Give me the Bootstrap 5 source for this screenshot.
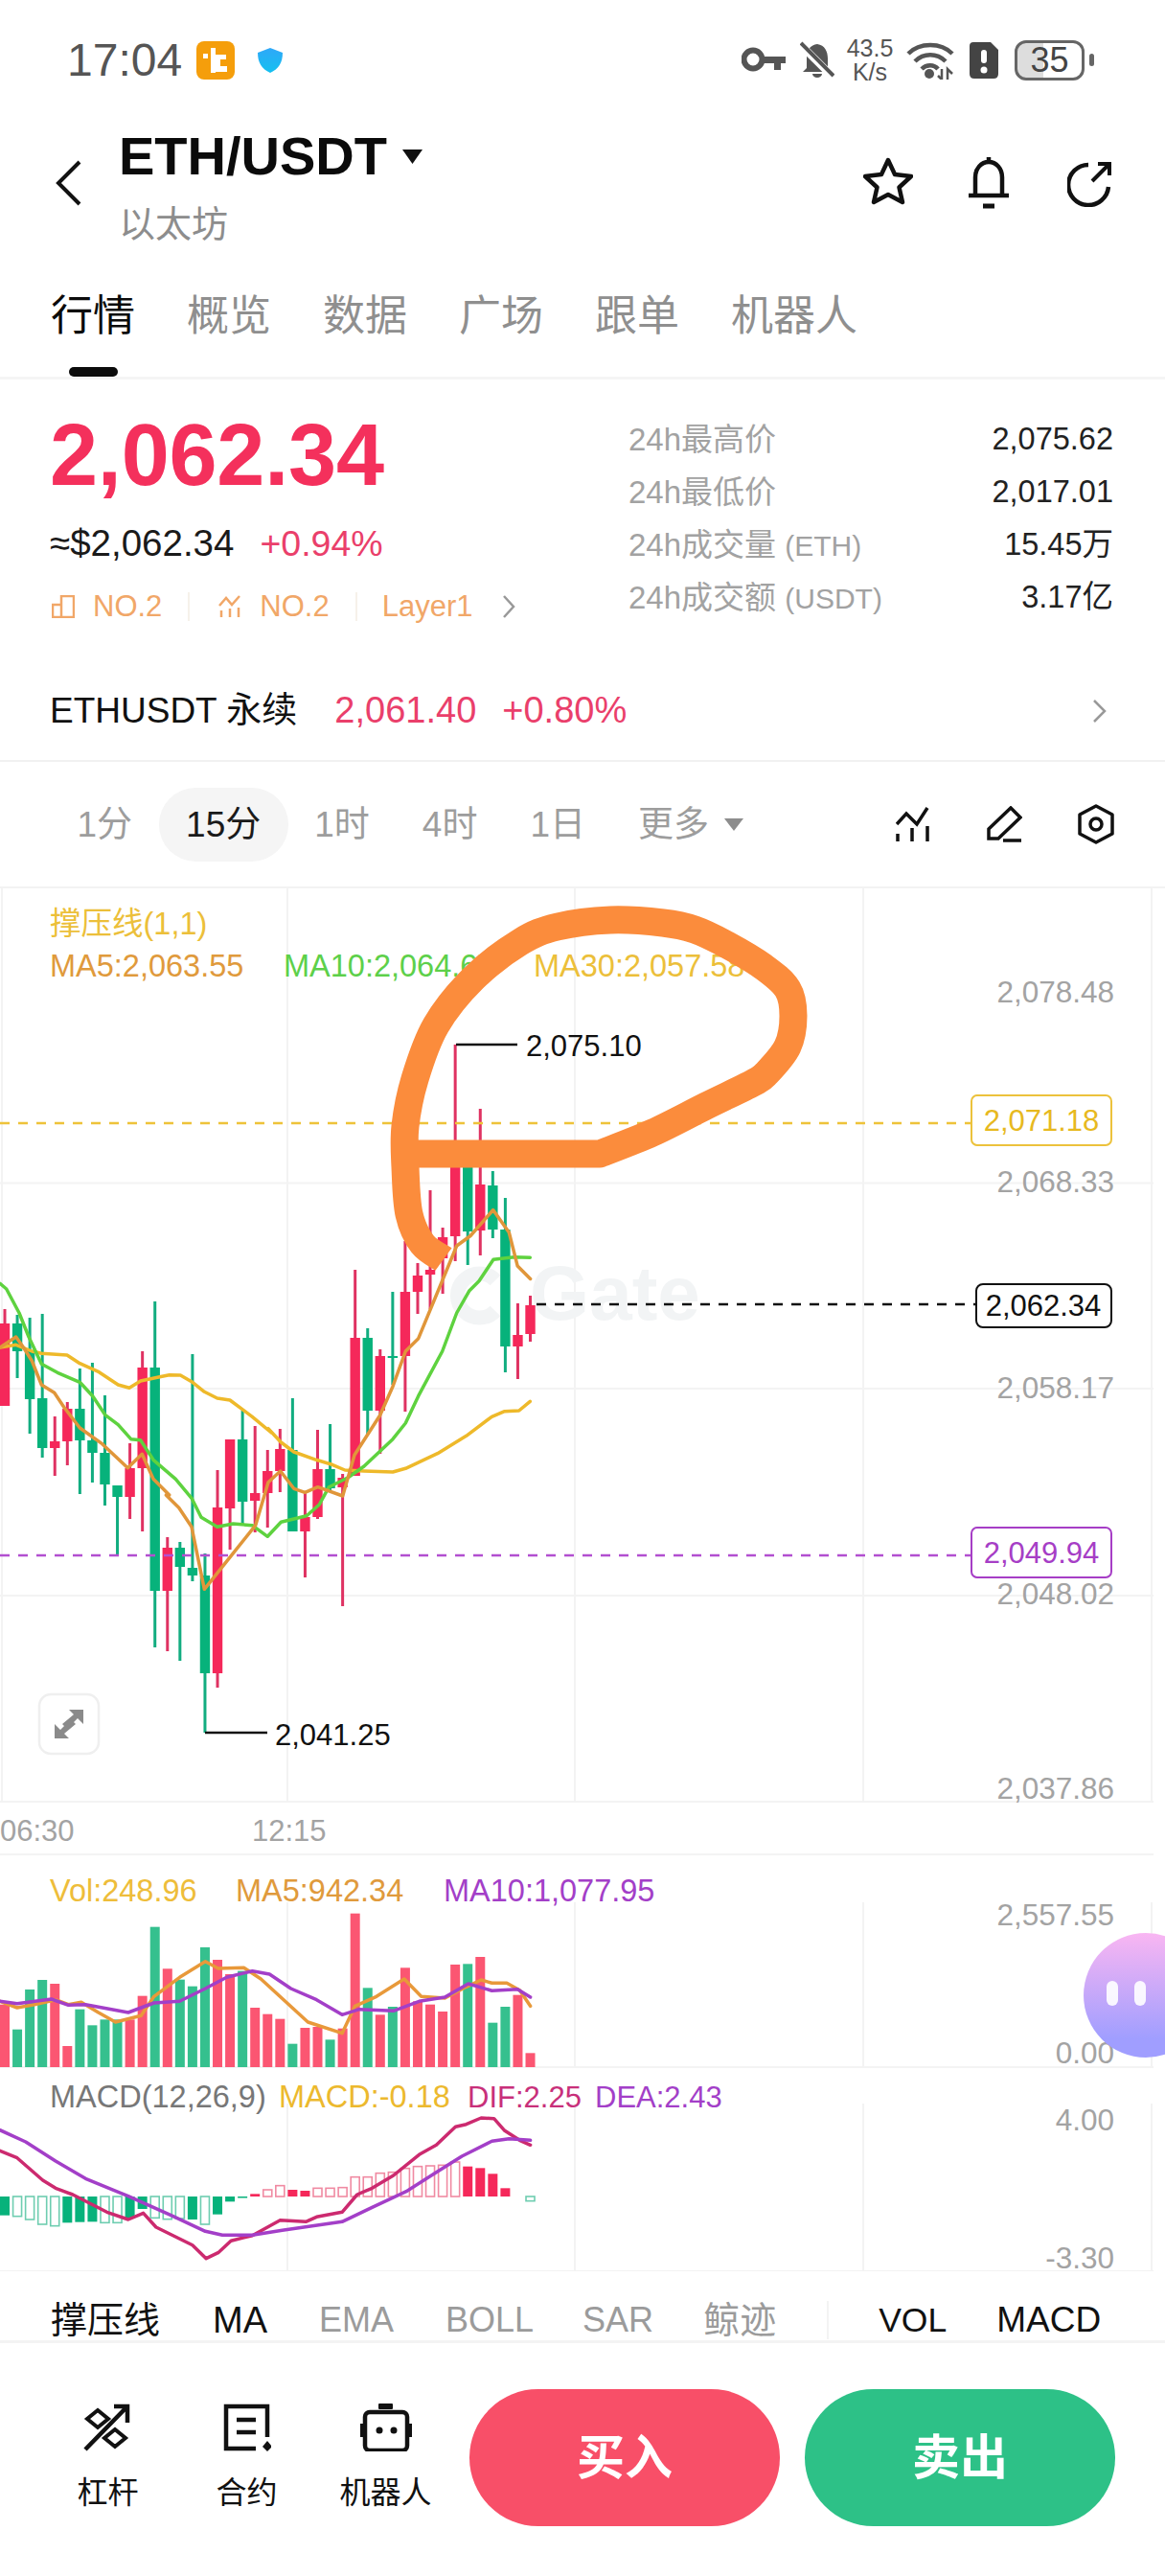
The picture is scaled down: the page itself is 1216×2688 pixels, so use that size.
<!DOCTYPE html>
<html lang="zh-CN">
<head>
<meta charset="utf-8">
<title>ETH/USDT</title>
<link href="https://cdn.jsdelivr.net/npm/bootstrap@5.3.0/dist/css/bootstrap.min.css" rel="stylesheet">
<style>
html,body{margin:0;background:#fff;}
body{width:1216px;height:2688px;overflow:hidden;font-family:"Liberation Sans","Noto Sans CJK SC",sans-serif;color:#111;}
svg{display:block;flex:none;}
.st-bar{height:125px;padding:0 74px 0 70px;color:#555;}
.st-time{font-size:48px;line-height:60px;margin-right:15px;}
.st-shield{margin-left:23px;}
.st-icons{margin-left:auto;}
.st-b1{margin-left:14px;}
.st-speed{margin-left:12px;font-size:25px;line-height:25px;width:50px;text-align:center;}
.st-w{margin-left:13px;}
.st-s{margin-left:15px;}
.st-batt{margin-left:17px;width:73px;height:42px;border:3px solid #666;border-radius:12px;background:linear-gradient(90deg,#ddd 40%,#fff 40%);font-size:36px;line-height:36px;text-align:center;color:#444;}
.st-tip{width:5px;height:13px;background:#666;border-radius:3px;margin-left:5px;}
.hd{height:150px;padding:7px 56px 0 58px;}
.hd-back{margin-top:35px;}
.hd-main{margin-left:39px;}
.hd-title{font-size:56px;font-weight:700;line-height:62px;color:#0b0b0b;}
.hd-sub{font-size:38px;line-height:46px;color:#8d8d8d;margin-top:17px;}
.hd-acts{margin-left:auto;margin-top:32px;}
.hd-bell{margin-left:57px;}
.hd-ref{margin-left:60px;margin-top:4px;}
.tabs-wrap{padding:25px 53px 0;border-bottom:3px solid #f5f5f5;height:121px;gap:54px;}
.tab-t{font-size:44px;line-height:60px;color:#8f8f8f;}
.tab-t.on{color:#0b0b0b;}
.tab-mark{display:block;width:51px;height:10px;background:#0b0b0b;border-radius:5px;margin:23px auto 0;}
.mk{height:294px;padding:29px 54px 0 52px;}
.mk-left{width:604px;}
.price{font-size:90px;font-weight:700;line-height:100px;color:#f4305c;letter-spacing:-.2px;}
.sub-p{font-size:38.5px;line-height:50px;margin-top:17px;color:#1a1a1a;gap:27px;}
.sub-p .up{font-size:37.5px;}
.up{color:#ea3f6b;}
.tags{font-size:31px;line-height:40px;margin-top:21px;color:#f1a768;padding-left:2px;}
.tag-n1{margin-left:19px;}
.tag-n2{margin-left:19px;}
.tag-sep{width:2px;height:30px;background:#f6f1ea;}
.tag-s1{margin:0 30px 0 27px;}
.tag-s2{margin:0 26px 0 27px;}
.tag-ch{margin-left:30px;}
.stats{padding-top:6px;width:506px;}
.st-row{height:55px;font-size:33px;color:#a2a2a2;}
.st-row i{font-style:normal;font-size:30px;}
.st-row b{font-weight:400;font-size:32.5px;color:#222;}
.perp{height:105px;padding:0 60px 0 52px;border-bottom:2px solid #f1f1f1;font-size:37px;}
.perp .v{font-size:38px;}
.perp .v1{margin-left:39px;}
.perp .v2{margin-left:27px;}
.perp-ch{margin-left:auto;}
.ivl{height:132px;padding:0 53px;border-bottom:2px solid #f3f3f3;font-size:37px;color:#9d9d9d;}
.ivl-i{padding:0 27.5px;line-height:77px;}
.ivl-i.on{padding:0 28.5px;background:#f5f5f5;border-radius:38px;color:#1a1a1a;}
.ivl-car{margin-left:-11px;}
.ivl-tools{margin-left:auto;gap:58px;}
.chart-wrap{position:relative;height:1443px;overflow:hidden;}
.bubble{position:absolute;left:1131px;top:1090px;width:130px;height:130px;border-radius:50%;background:linear-gradient(180deg,#f9b6f2,#a09eff 85%);}
.eye{position:absolute;top:50px;width:12px;height:26px;background:#fff;border-radius:6px;opacity:.9;}
.eye.l{left:24px;}
.eye.r{left:53px;}
.tx{font-family:"Liberation Sans","Noto Sans CJK SC",sans-serif;font-size:31px;dominant-baseline:central;}
.tx.lg{font-size:32.5px;}
.tx.sm{font-size:31px;}
.tx.ax{fill:#a3a3a3;text-anchor:end;font-size:31.5px;}
.tx.wm{font-size:80px;font-weight:700;fill:#f2f4f5;}
.inds{height:72px;padding:29px 0 0 53px;font-size:36px;line-height:50px;color:#9b9b9b;white-space:nowrap;}
.inds .on{color:#111;}
.inds .big{font-size:38px;}
.inds .i2{margin-left:55px;}
.inds .i3,.inds .i4{margin-left:54px;}
.inds .i5{margin-left:51px;}
.inds .i6{margin-left:52px;}
.inds .i7{margin-left:53px;}
.inds .i8{margin-left:52px;font-size:35.5px;}
.inds .i9{margin-left:52px;font-size:37px;}
.inds-wrap{height:75px;border-bottom:3px solid #f3f3f3;}
.ind-sep{width:2px;height:40px;background:#f3f3f3;}
.foot{padding:48px 0 0 40px;}
.tool{width:145px;padding-top:15px;font-size:32px;line-height:40px;color:#111;text-align:center;}
.tool svg{margin:0 auto 23px;}
.act{width:324px;height:143px;border-radius:72px;border:0;color:#fff;font-size:50px;font-weight:700;line-height:1;}
.act.buy,.act.buy:hover{background:#f84f68;color:#fff;margin-left:15px;}
.act.sell,.act.sell:hover{background:#2dc187;color:#fff;margin-left:26px;}
</style>
</head>
<body>

<div class="st-bar d-flex align-items-center">
  <span class="st-time">17:04</span>
  <svg width="40" height="40" viewBox="0 0 40 40"><rect width="40" height="40" rx="8" fill="#f59e0b"/><rect x="7" y="13" width="5" height="5" fill="#fff"/><rect x="15" y="7" width="5" height="26" fill="#fff"/><path d="M20 14H31V19H25V26H32V32H20Z" fill="#fff"/></svg>
  <svg class="st-shield" width="28" height="28" viewBox="0 0 28 28"><defs><linearGradient id="sh" x1="0" y1="0" x2="0" y2="1"><stop offset="0" stop-color="#2fa8f8"/><stop offset="1" stop-color="#14c0f0"/></linearGradient></defs><path d="M14 1L27 6C27 16 23 23 14 27C5 23 1 16 1 6Z" fill="url(#sh)"/></svg>
  <div class="st-icons d-flex align-items-center">
    <svg width="47" height="27" viewBox="0 0 47 27"><circle cx="12" cy="13" r="9.500" fill="none" stroke="#555" stroke-width="6"/><path d="M20 10H46V17H41V24H34V17H20Z" fill="#555"/></svg>
    <svg class="st-b1" width="36" height="40" viewBox="0 0 36 40"><path d="M18 3C26 4 29 11 29 18V28L33 32H3L7 28V16C7 9 11 4 18 3Z" fill="#555"/><path d="M13 34H23A5 4 0 0 1 13 34Z" fill="#555"/><path d="M0 3L35 38" stroke="#fff" stroke-width="8"/><path d="M1 2L35 36" stroke="#555" stroke-width="4"/></svg>
    <div class="st-speed"><div>43.5</div><div>K/s</div></div>
    <svg class="st-w" width="51" height="40" viewBox="0 0 51 40"><path d="M2 13C14 1 36 1 48 13M9 21C18 12 32 12 41 21M16 29C21 24 29 24 33 29" fill="none" stroke="#555" stroke-width="4.500"/><circle cx="24" cy="34" r="5" fill="#555"/><path d="M37 29V40L33 36M43 40V29L48 34" fill="none" stroke="#555" stroke-width="2.500"/></svg>
    <svg class="st-s" width="30" height="38" viewBox="0 0 30 38"><path d="M4 0H22L30 8V33Q30 38 25 38H5Q0 38 0 33V4Q0 0 4 0Z" fill="#444"/><rect x="12" y="8" width="6" height="14" rx="3" fill="#fff"/><circle cx="15" cy="29" r="3.500" fill="#fff"/></svg>
    <div class="st-batt">35</div><span class="st-tip"></span>
  </div>
</div>

<div class="hd d-flex align-items-start">
  <svg class="hd-back" width="27" height="48" viewBox="0 0 27 48"><path d="M25 2L3 24L25 46" fill="none" stroke="#111" stroke-width="4"/></svg>
  <div class="hd-main">
    <div class="hd-title d-flex align-items-center">ETH/USDT<svg class="ms-3" width="21" height="15" viewBox="0 0 21 15"><path d="M0 0H21L10.500 15Z" fill="#111"/></svg></div>
    <div class="hd-sub">以太坊</div>
  </div>
  <div class="hd-acts d-flex align-items-start">
    <svg width="52" height="50" viewBox="0 0 52 50"><path d="M26 3L33 18L50 20L37.500 31.500L41 47L26 39L11 47L14.500 31.500L2 20L19 18Z" fill="none" stroke="#111" stroke-width="4.500" stroke-linejoin="round"/></svg>
    <svg class="hd-bell" width="44" height="54" viewBox="0 0 44 54"><path d="M22 0V5M8 39V21C8 12 14 5 22 5S36 12 36 21V39M1 40H43" fill="none" stroke="#111" stroke-width="4.500"/><path d="M16 51H28" stroke="#111" stroke-width="5"/></svg>
    <svg class="hd-ref" width="46" height="48" viewBox="0 0 46 48"><path d="M22 4A21 21 0 1 0 43 27" fill="none" stroke="#111" stroke-width="4.500"/><path d="M26 21L43 4M32 3H44V15" fill="none" stroke="#111" stroke-width="4"/></svg>
  </div>
</div>

<div class="tabs-wrap d-flex align-items-start">
  <div><div class="tab-t on">行情</div><span class="tab-mark"></span></div>
  <div class="tab-t">概览</div>
  <div class="tab-t">数据</div>
  <div class="tab-t">广场</div>
  <div class="tab-t">跟单</div>
  <div class="tab-t">机器人</div>
</div>

<div class="mk d-flex">
  <div class="mk-left">
    <div class="price">2,062.34</div>
    <div class="sub-p d-flex"><span>≈$2,062.34</span><span class="up">+0.94%</span></div>
    <div class="tags d-flex align-items-center">
      <svg width="24" height="24" viewBox="0 0 24 24"><path d="M1 10H10V23H1ZM10 1H23V23H10Z" fill="none" stroke="#f1a768" stroke-width="2.500"/></svg>
      <span class="tag-n1">NO.2</span><span class="tag-sep tag-s1"></span>
      <svg width="24" height="24" viewBox="0 0 24 24"><path d="M1 11L8 3L14 10L22 1M3 16V23M12 14V23M21 13V23" fill="none" stroke="#f1a768" stroke-width="2.500"/></svg>
      <span class="tag-n2">NO.2</span><span class="tag-sep tag-s2"></span>
      <span>Layer1</span>
      <svg class="tag-ch" width="14" height="26" viewBox="0 0 14 26"><path d="M2 2L12 13L2 24" fill="none" stroke="#999" stroke-width="2.500"/></svg>
    </div>
  </div>
  <div class="stats">
    <div class="st-row d-flex justify-content-between align-items-center"><span>24h最高价</span><b>2,075.62</b></div>
    <div class="st-row d-flex justify-content-between align-items-center"><span>24h最低价</span><b>2,017.01</b></div>
    <div class="st-row d-flex justify-content-between align-items-center"><span>24h成交量 <i>(ETH)</i></span><b>15.45万</b></div>
    <div class="st-row d-flex justify-content-between align-items-center"><span>24h成交额 <i>(USDT)</i></span><b>3.17亿</b></div>
  </div>
</div>

<div class="perp d-flex align-items-center">
  <span>ETHUSDT 永续</span>
  <span class="up v v1">2,061.40</span>
  <span class="up v v2">+0.80%</span>
  <svg class="perp-ch" width="16" height="26" viewBox="0 0 16 26"><path d="M2 2L13 13L2 24" fill="none" stroke="#999" stroke-width="2.500"/></svg>
</div>

<div class="ivl d-flex align-items-center">
  <span class="ivl-i">1分</span>
  <span class="ivl-i on">15分</span>
  <span class="ivl-i">1时</span>
  <span class="ivl-i">4时</span>
  <span class="ivl-i">1日</span>
  <span class="ivl-i">更多</span>
  <svg class="ivl-car" width="20" height="13" viewBox="0 0 20 13"><path d="M0 0H20L10 13Z" fill="#8d8d8d"/></svg>
  <div class="ivl-tools d-flex align-items-center">
    <svg width="36" height="38" viewBox="0 0 36 38"><path d="M1 19L11 8L22 19L33 2M2 29V37M17 23V37M33 21V37" fill="none" stroke="#111" stroke-width="3.500"/></svg>
    <svg width="38" height="38" viewBox="0 0 38 38"><path d="M26 2L36 12L13 34H3V24ZM18 36H37" fill="none" stroke="#111" stroke-width="3.500"/></svg>
    <svg width="38" height="42" viewBox="0 0 38 42"><path d="M19 2L36 11V31L19 40L2 31V11Z" fill="none" stroke="#111" stroke-width="3.500" stroke-linejoin="round"/><circle cx="19" cy="21" r="6" fill="none" stroke="#111" stroke-width="3.500"/></svg>
  </div>
</div>

<div class="chart-wrap">
  <svg width="1216" height="1443" viewBox="0 927 1216 1443">
    <g stroke="#f3f3f3" stroke-width="2" fill="none">
      <path d="M300 927V1880M600 927V1880M901 927V1880M1202 927V1880M2 927V1880"/>
      <path d="M0 1234.500H1204M0 1449H1204M0 1665H1204M0 1880H1204M0 1935H1204"/>
      <path d="M300 1985V2157M600 1985V2157M901 1985V2157M1202 1985V2157M0 2157H1204"/>
      <path d="M300 2195V2370M600 2195V2370M901 2195V2370M1202 2195V2370M0 2370H1204"/>
    </g>
    <path d="M517 1336A23 23 0 1 0 517 1368" fill="none" stroke="#f2f4f5" stroke-width="15"/>
    <text class="tx wm" x="553" y="1349">Gate</text>
    <g id="candles"></g>
    <path d="M0 1172H1013" stroke="#eec33a" stroke-width="2.500" stroke-dasharray="10 9"/>
    <path d="M560 1361H1018" stroke="#111" stroke-width="2.500" stroke-dasharray="10 9"/>
    <path d="M0 1623H1013" stroke="#b24fd0" stroke-width="2.500" stroke-dasharray="10 9"/>
    <g id="malines" fill="none" stroke-linejoin="round" stroke-linecap="round"></g>

    <path d="M476 1090H540" stroke="#111" stroke-width="2.500"/>
    <path d="M214 1808H279" stroke="#111" stroke-width="2.500"/>
    <text class="tx" x="549" y="1091" fill="#111">2,075.10</text>
    <text class="tx" x="287" y="1810" fill="#111">2,041.25</text>

    <text class="tx lg" x="52" y="964" fill="#ecbf3a">撑压线(1,1)</text>
    <text class="tx lg" x="52" y="1008" fill="#e09a3c">MA5:2,063.55</text>
    <text class="tx lg" x="296" y="1008" fill="#5dd04a">MA10:2,064.67</text>
    <text class="tx lg" x="557" y="1008" fill="#ecbf3a">MA30:2,057.58</text>

    <text class="tx ax" x="1163" y="1035">2,078.48</text>
    <text class="tx ax" x="1163" y="1233">2,068.33</text>
    <text class="tx ax" x="1163" y="1448">2,058.17</text>
    <text class="tx ax" x="1163" y="1663">2,048.02</text>
    <text class="tx ax" x="1163" y="1866">2,037.86</text>

    <rect x="1014" y="1143" width="146" height="52" rx="6" fill="#fff" stroke="#ecc23c" stroke-width="2"/>
    <text class="tx" x="1087" y="1169" text-anchor="middle" fill="#e7b91f">2,071.18</text>
    <rect x="1019" y="1340" width="141" height="45" rx="7" fill="#fff" stroke="#111" stroke-width="2"/>
    <text class="tx" x="1089" y="1362" text-anchor="middle" fill="#111">2,062.34</text>
    <rect x="1014" y="1594" width="146" height="52" rx="6" fill="#fff" stroke="#a63ec6" stroke-width="2"/>
    <text class="tx" x="1087" y="1620" text-anchor="middle" fill="#a63ec6">2,049.94</text>

    <rect x="41" y="1768" width="62" height="62" rx="12" fill="#fff" stroke="#efefef" stroke-width="2.500"/>
    <path d="M87 1784H72L77 1789L65 1799L70 1804L81 1793L87 1799ZM57 1814H72L67 1809L79 1799L74 1794L63 1805L57 1799Z" fill="#8a8a8a"/>

    <text class="tx" x="0" y="1910" fill="#a3a3a3">06:30</text>
    <text class="tx" x="263" y="1910" fill="#a3a3a3">12:15</text>

    <text class="tx lg" x="52" y="1973" fill="#eebd3a">Vol:248.96</text>
    <text class="tx lg" x="246" y="1973" fill="#e09a3c">MA5:942.34</text>
    <text class="tx lg" x="463" y="1973" fill="#a33fc8">MA10:1,077.95</text>
    <text class="tx ax" x="1163" y="1998">2,557.55</text>
    <text class="tx ax" x="1163" y="2142">0.00</text>

    <g id="vol"></g>

    <text class="tx lg" x="52" y="2188" fill="#777">MACD(12,26,9)</text>
    <text class="tx lg" x="291" y="2188" fill="#ecb92e">MACD:-0.18</text>
    <text class="tx sm" x="488" y="2188" fill="#c8307a">DIF:2.25</text>
    <text class="tx sm" x="621" y="2188" fill="#a33fc8">DEA:2.43</text>
    <text class="tx ax" x="1163" y="2212">4.00</text>
    <text class="tx ax" x="1163" y="2356">-3.30</text>

    <g id="macd"></g>

    <path id="ann" fill="none" stroke="#fb8c3c" stroke-width="29" stroke-linejoin="round"/>
  </svg>
  <div class="bubble"><span class="eye l"></span><span class="eye r"></span></div>
</div>

<div class="inds-wrap">
  <div class="inds d-flex align-items-center">
    <span class="on big">撑压线</span>
    <span class="on big i2">MA</span>
    <span class="i3">EMA</span>
    <span class="i4">BOLL</span>
    <span class="i5">SAR</span>
    <span class="big i6">鲸迹</span>
    <span class="ind-sep i7"></span>
    <span class="on i8">VOL</span>
    <span class="on i9">MACD</span>
  </div>
</div>

<div class="foot d-flex align-items-start">
  <div class="tool">
    <svg width="52" height="50" viewBox="2 0 52 50"><path d="M48 3L4 48M34 3H48V20" fill="none" stroke="#111" stroke-width="4.500"/><path d="M17 7L28 16L17 25L6 16ZM35 27L46 36L35 45L24 36Z" fill="#fff" stroke="#111" stroke-width="4"/></svg>
    杠杆
  </div>
  <div class="tool">
    <svg width="50" height="50" viewBox="0 0 50 50"><path d="M46 35V3H3V47H34M14 17H34M14 30H34" fill="none" stroke="#111" stroke-width="4.500"/><path d="M46 39L51 45L46 50L41 45Z" fill="#111"/></svg>
    合约
  </div>
  <div class="tool">
    <svg width="54" height="50" viewBox="0 0 54 50"><rect x="19" y="0" width="15" height="6" rx="1" fill="#111"/><rect x="5" y="9" width="44" height="40" rx="5" fill="none" stroke="#111" stroke-width="4.500"/><path d="M1.500 21V35M52.500 21V35" stroke="#111" stroke-width="3"/><circle cx="20" cy="28" r="3.500" fill="#111"/><circle cx="35" cy="28" r="3.500" fill="#111"/></svg>
    机器人
  </div>
  <button type="button" class="btn act buy">买入</button>
  <button type="button" class="btn act sell">卖出</button>
</div>

<script>
var NS="http://www.w3.org/2000/svg";
function el(parent,tag,attrs){var e=document.createElementNS(NS,tag);for(var k in attrs)e.setAttribute(k,attrs[k]);parent.appendChild(e);return e;}
function xi(i){return 5+13.06*i;}
var RED="#f5285a",GRN="#07b27b",WR="#df3262",WG="#12ad80";
/* colour, high, body top, body bottom, low */
var C=[["r",1366,1381,1467,1467],["g",1372,1381,1410,1438],["g",1375,1410,1460,1496],["g",1371,1459,1511,1521],["r",1478,1504,1511,1540],["r",1463,1470,1504,1529],["g",1428,1470,1503,1559],["g",1422,1503,1516,1547],["g",1456,1516,1549,1571],["g",1550,1550,1562,1623],["r",1506,1532,1562,1585],["r",1410,1427,1532,1598],["g",1358,1427,1660,1719],["r",1604,1615,1660,1723],["g",1609,1615,1635,1733],["g",1413,1636,1644,1650],["g",1621,1644,1746,1808],["r",1534,1573,1746,1761],["r",1502,1502,1574,1617],["g",1472,1502,1567,1590],["r",1488,1558,1566,1599],["r",1513,1535,1558,1594],["r",1491,1512,1535,1557],["g",1459,1513,1598,1598],["r",1558,1583,1598,1646],["r",1492,1533,1583,1585],["g",1486,1533,1553,1555],["r",1538,1542,1552,1676],["r",1325,1396,1540,1540],["g",1386,1396,1472,1497],["r",1408,1415,1472,1517],["g",1348,1415,1416,1445],["r",1295,1348,1415,1473],["r",1318,1331,1348,1371],["r",1242,1325,1330,1366],["r",1281,1291,1313,1350],["r",1090,1215,1290,1316],["g",1200,1210,1285,1320],["r",1157,1236,1284,1310],["g",1222,1237,1283,1292],["g",1250,1283,1405,1432],["r",1360,1393,1405,1439],["r",1352,1362,1392,1400]];
var cg=document.getElementById("candles");
C.forEach(function(c,i){var x=xi(i);
 el(cg,"rect",{x:x-1.5,y:c[1],width:3,height:c[4]-c[1],fill:c[0]=="r"?WR:WG});
 el(cg,"rect",{x:x-5.2,y:c[2],width:10.4,height:Math.max(c[3]-c[2],2),fill:c[0]=="r"?RED:GRN});
});
function poly(g,color,w,groups){var s=[];groups.forEach(function(gp){var sx=gp[0],ox=gp[1],sy=gp[2],oy=gp[3],p=gp[4];for(var i=0;i<p.length;i+=2)s.push((ox+p[i]/sx).toFixed(1)+","+(oy+p[i+1]/sy).toFixed(1));});
 el(g,"polyline",{points:s.join(" "),stroke:color,"stroke-width":w});}
var mg=document.getElementById("malines");
poly(mg,"#eeb92a",3.5,[[3,0,3,1280,[0,378,50,370,100,390,130,397,210,402,250,428,310,455,370,495,405,505,440,483,500,470,530,464,565,465,600,485,640,517,680,537,720,543,790,595,850,645]],[3,280,3,1280,[0,632,40,675,80,705,150,730,200,745,240,762,300,765,390,768,430,757,530,710,620,655,700,595,740,578,785,576,820,547]]]);
poly(mg,"#5ed23f",3.5,[[3,0,3,1280,[0,178,20,195,60,270,90,345,130,430,180,457,250,487,290,530,330,590,370,620,410,665,440,668,480,730,550,790,600,850]],[3,0,3,1560,[600,10,630,70,680,100,730,90,790,95,838,130,880,85,960,65,1000,30]],[3,280,3,1280,[190,815,250,785,300,750,390,665,430,615,470,530,545,390,590,270,630,200,660,170,705,103,770,95,820,97]]]);
poly(mg,"#e0963a",3.5,[[3,0,3,1280,[0,378,50,345,75,380,100,420,130,495,170,520,200,565,250,630,320,680,400,755,445,712,480,790,530,840]],[3,0,3,1560,[520,0,560,40,600,100,640,295,700,220,800,95]],[3,280,3,1280,[0,800,38,765,80,820,115,832,155,815,233,843,270,715,350,590,390,500,430,390,470,350,590,60]],[2.24,0,2.851,930,[1100,1025,1153,948,1190,1015,1210,1115,1240,1153]]]);
var VT=[575,653,528,498,510,705,590,640,622,622,622,548,332,463,497,518,396,435,480,470,585,605,620,698,648,645,685,650,290,523,607,582,460,565,575,597,450,448,426,632,582,545,727];
var vg=document.getElementById("vol");
VT.forEach(function(t,i){var y=1900+t/3;el(vg,"rect",{x:xi(i)-5,y:y,width:10,height:2157-y,fill:C[i][0]=="r"?"#fb5672":"#35c08e"});});
var vl=el(vg,"g",{fill:"none","stroke-linejoin":"round","stroke-linecap":"round"});
poly(vl,"#e8993a",3.5,[[2.24,0,3,1900,[0,565,40,585,80,575,130,560,160,575,190,568,230,600,270,630,330,610,360,550,420,490,480,440,510,462,570,460,610,495,720,630,800,665,830,580,880,550,945,495,985,550,1040,555,1090,520,1125,498,1150,508,1185,508,1215,530,1240,580]]]);
poly(vl,"#a33fc8",3.5,[[2.24,0,3,1900,[0,565,40,572,120,558,160,577,200,575,300,600,360,570,420,565,480,525,530,490,590,470,630,480,680,525,740,560,800,607,840,590,920,595,980,565,1040,552,1095,510,1150,532,1210,527,1240,552]]]);
/* [end of bar in zoom px, hollow] */
var H=[[1235,0],[1238,1],[1248,1],[1263,1],[1268,1],[1258,0],[1256,0],[1255,0],[1258,1],[1258,1],[1243,0],[1215,0],[1243,1],[1247,1],[1245,1],[1248,0],[1263,1],[1232,0],[1192,0],[1178,0],[1168,0],[1155,1],[1142,1],[1155,0],[1158,0],[1150,1],[1150,1],[1148,1],[1115,1],[1115,1],[1103,1],[1100,1],[1088,1],[1082,1],[1080,1],[1078,1],[1068,1],[1082,0],[1087,0],[1105,0],[1150,0],null,[1190,1]];
var hg=document.getElementById("macd"),Z=2292;
H.forEach(function(h,i){if(!h)return;var y=1900+h[0]/3,top=Math.min(y,Z),ht=Math.max(Math.abs(y-Z),1.5),up=y<Z,col=up?"#f5285a":"#07b27b";
 if(h[1]){el(hg,"rect",{x:xi(i)-4.5,y:top,width:9,height:ht,fill:"#fff",stroke:up?"#f08aa2":"#6ecdb0","stroke-width":1.6});}
 else{el(hg,"rect",{x:xi(i)-5,y:top,width:10,height:ht,fill:col});}
});
var ml=el(hg,"g",{fill:"none","stroke-linejoin":"round","stroke-linecap":"round"});
poly(ml,"#cc2a6f",3.5,[[2.24,0,3,1900,[0,1033,40,1055,100,1125,130,1150,170,1170,250,1225,300,1248,335,1228,365,1272,450,1328,482,1370,510,1352,540,1315,590,1298,655,1250,715,1255,740,1240,800,1225,835,1170,870,1150,920,1110,980,1045,1020,1015,1065,958,1090,950,1125,930,1155,932,1180,970,1215,1000,1240,1015]]]);
poly(ml,"#a33fc8",3.5,[[2.24,0,3,1900,[0,968,60,1005,130,1065,200,1120,300,1175,400,1235,480,1285,520,1297,590,1297,660,1282,800,1255,870,1210,950,1160,1020,1100,1080,1050,1150,1003,1190,995,1240,1000]]]);
/* hand-drawn annotation: smooth curve through the traced points, then the straight closing stroke */
var A=[[463,1314],[441,1298],[427,1267],[423,1218],[423,1175],[433,1126],[455,1070],[494,1021],[543,983],[582,967],[637,960],[692,963],[725,970],[759,986],[797,1009],[822,1032],[828,1060],[822,1092],[800,1120],[786,1130],[737,1154],[681,1182],[626,1204]];
var d="M"+A[0][0]+" "+A[0][1];
for(var i=0;i<A.length-1;i++){var p0=A[Math.max(i-1,0)],p1=A[i],p2=A[i+1],p3=A[Math.min(i+2,A.length-1)];
 d+="C"+(p1[0]+(p2[0]-p0[0])/6).toFixed(1)+" "+(p1[1]+(p2[1]-p0[1])/6).toFixed(1)+" "+(p2[0]-(p3[0]-p1[0])/6).toFixed(1)+" "+(p2[1]-(p3[1]-p1[1])/6).toFixed(1)+" "+p2[0]+" "+p2[1];}
document.getElementById("ann").setAttribute("d",d+"H425");
</script>
<script src="https://cdn.jsdelivr.net/npm/bootstrap@5.3.0/dist/js/bootstrap.bundle.min.js"></script>
</body>
</html>
